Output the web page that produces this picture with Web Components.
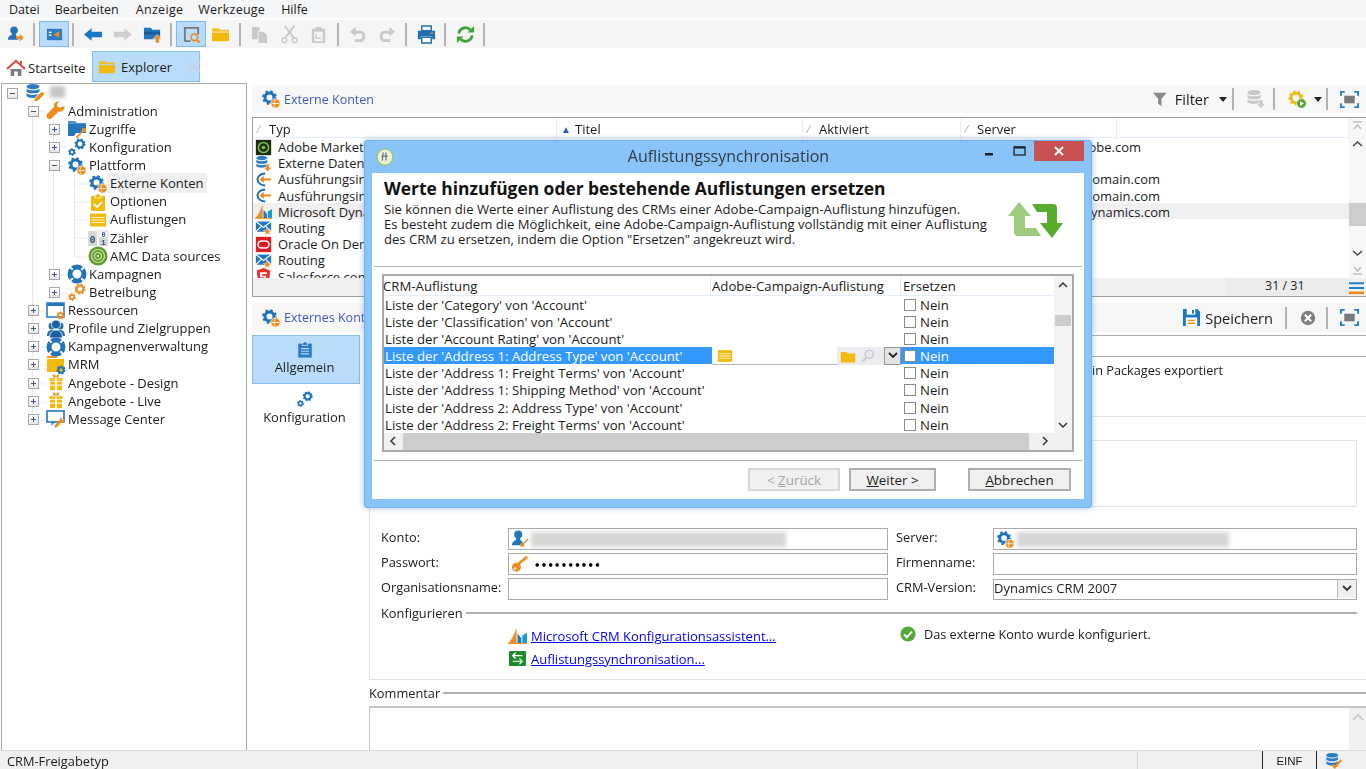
<!DOCTYPE html>
<html lang="de"><head><meta charset="utf-8"><title>Adobe Campaign</title>
<style>
html,body{margin:0;padding:0;width:1366px;height:769px;overflow:hidden;background:#fff;font:13px "Open Sans","Noto Sans",sans-serif;color:#1c1c1c}
</style></head><body>
<app-shell>
  <app-menubar></app-menubar>
  <app-toolbar></app-toolbar>
  <app-tabs></app-tabs>
  <app-main>
    <app-tree slot="tree"></app-tree>
    <list-panel slot="right"></list-panel>
    <detail-panel slot="right"></detail-panel>
  </app-main>
  <status-bar></status-bar>
  <sync-dialog></sync-dialog>
</app-shell>
<script>
const gear=(x,y,r,c,w,n=8)=>{const R=r+w*.5,d=(2*Math.PI*R/(2*n)).toFixed(2);return `<circle cx="${x}" cy="${y}" r="${r}" fill="none" stroke="${c}" stroke-width="${w}"/><circle cx="${x}" cy="${y}" r="${R}" fill="none" stroke="${c}" stroke-width="${w*.9}" stroke-dasharray="${d} ${d}"/>`};
const BL='#1f72bd',OR='#ee8c1e',YE='#f2b90f',GY='#c9c9c9';
const globe=(x,y,r)=>`<circle cx="${x}" cy="${y}" r="${r}" fill="${OR}" stroke="#fff" stroke-width=".8"/><path d="M${x-r+1} ${y}h${2*r-2}M${x} ${y-r+1}c-2 2-2 ${2*r-4} 0 ${2*r-2}" stroke="#fff" stroke-width=".8" fill="none"/>`;
const dbs=c=>`<ellipse cx="8" cy="3.6" rx="6.5" ry="2.6" fill="${c}"/><path d="M1.5 5.4c1 2.6 12 2.6 13 0v3c-1 2.6-12 2.6-13 0zM1.5 10c1 2.6 12 2.6 13 0v3c-1 2.6-12 2.6-13 0z" fill="${c}"/>`;
const folder=c=>`<path d="M1 5V3.5h7L10 5h9v2H1z" fill="${c}" opacity=".85"/><path d="M1 8h18v8a1 1 0 0 1-1 1H2a1 1 0 0 1-1-1z" fill="${c}"/>`;
const ICONS={
user:`<circle cx="8.5" cy="5.5" r="4" fill="${BL}"/><path d="M6.5 8l-.5 2.5C3 11.5 2 13 2 15.5h11V14l-2.5-3.5-.5-2.5z" fill="${BL}"/><path d="M11 13.5h4V11l4.5 4-4.5 4v-2.5h-4z" fill="${OR}" transform="translate(0 -1) scale(.96)"/>`,
panel:`<rect x="2" y="4" width="16" height="12" fill="#2b7cc2"/><rect x="4" y="7" width="3" height="1.4" fill="#fff"/><rect x="4" y="10" width="3" height="1.4" fill="#fff"/><path d="M15 6.5v7l-6-3.5z" fill="${OR}"/>`,
left:`<path d="M0 10l8-6.5V7h11v6H8v3.5z" fill="#1c78c4"/>`,
right:`<path d="M20 10l-8-6.5V7H1v6h11v3.5z" fill="#cfcfcf"/>`,
folderup:`<path d="M1 3h7l2 2h8v10H1z" fill="#2277bd"/><path d="M1 7h17v3H1z" fill="#195d99"/><path d="M15 10l4.5 4.5H17V19h-4v-4.5h-2.5z" fill="${OR}" stroke="#fff" stroke-width=".5"/>`,
searchbox:`<path d="M3 17V3h14v7M3 17h6" stroke="#777" stroke-width="2" fill="none"/><circle cx="13" cy="13" r="3.5" fill="none" stroke="${OR}" stroke-width="1.7"/><path d="M15.5 15.5l3 3" stroke="${OR}" stroke-width="2.2"/>`,
folder:folder(YE),
copy:`<path d="M2 2h8v4H8v9H2z" fill="${GY}"/><path d="M9 7h5l4 4v8H9z" fill="${GY}"/>`,
cut:`<path d="M5 1l10 13M15 1L5 14" stroke="${GY}" stroke-width="2"/><circle cx="4.5" cy="16" r="2.5" fill="none" stroke="${GY}" stroke-width="1.6"/><circle cx="15.5" cy="16" r="2.5" fill="none" stroke="${GY}" stroke-width="1.6"/>`,
paste:`<path d="M3 4h4V2h6v2h4v15H3z" fill="${GY}"/><rect x="5.5" y="7" width="9" height="10" fill="#f5f5f5"/><path d="M7.5 10v4h5" stroke="${GY}" stroke-width="1.5" fill="none"/>`,
undo:`<path d="M8 2L2 7l6 5V9h5c3 0 3 6 0 6H7v3h6c7 0 7-12 0-12H8z" fill="${GY}"/>`,
redo:`<path d="M12 2l6 5-6 5V9H7c-3 0-3 6 0 6h6v3H7C0 18 0 6 7 6h5z" fill="${GY}"/>`,
print:`<path d="M5 1h10v5H5z" fill="none" stroke="#1c6fb3" stroke-width="1.5"/><path d="M1 6h18v9h-3v-3H4v3H1z" fill="#1c6fb3"/><rect x="14" y="8" width="3" height="1.5" fill="${OR}"/><path d="M5 13h10v6H5z" fill="#fff" stroke="#1c6fb3" stroke-width="1.5"/>`,
refresh:`<path d="M3 9a7 7 0 0 1 12-4" fill="none" stroke="#3da33a" stroke-width="3"/><path d="M12 8h7V1z" fill="#3da33a"/><path d="M17 11a7 7 0 0 1-12 4" fill="none" stroke="#3da33a" stroke-width="3"/><path d="M8 12H1v7z" fill="#3da33a"/>`,
home:`<path d="M4 11h12v8h-4v-5H8v5H4z" fill="#7d7d7d"/><path d="M0 11L10 2l10 9" fill="none" stroke="#d9473c" stroke-width="2.2"/><rect x="14.5" y="2" width="2" height="4" fill="#d9473c"/>`,
x:`<path d="M3 3l14 14M17 3L3 17" stroke="#c6d3df" stroke-width="3"/>`,
db:dbs('#2a7cc4')+`<path d="M9 16l7-7c2-1 4 1 3 3l-6 6-4 1z" fill="${OR}" stroke="#fff" stroke-width=".8"/>`,
wrench:`<path d="M18.5 5c.5 3-2 6.5-6 5.5L6 17a3 3 0 0 1-4.5-4.5L8 6C7 2 10.5 0 13.5.5L11 3l.5 3 3 .5z" fill="${OR}"/>`,
folderkey:`<path d="M1 2h7l2 2h9v4H1z" fill="#2277bd" opacity=".8"/><path d="M1 5h18v9H9l-2 3H1z" fill="#2277bd"/><circle cx="17" cy="11" r="2.3" fill="${OR}"/><path d="M15.5 12.5L10 18l1.5 1" stroke="${OR}" stroke-width="1.6" fill="none"/>`,
gears:gear(13,7,3.5,'#1f72bd',2.2)+gear(5,15,2.2,'#1f72bd',1.7,6),
gearso:gear(13,7,3.5,OR,2.2)+gear(5,15,2.2,OR,1.7,6),
gearglobe:gear(8.5,8.5,4.5,'#1f72bd',3)+globe(14.5,14.5,4.7),
clip:`<rect x="3" y="4" width="14" height="15" fill="${YE}"/><path d="M7 6V3h1.5a1.5 1.5 0 0 1 3 0H13v3z" fill="${YE}" stroke="#fff" stroke-width=".7"/><path d="M6 12l3 3 5-5" fill="none" stroke="#fff" stroke-width="1.8"/>`,
list:`<rect x="2" y="3.5" width="16" height="13" fill="${YE}"/><path d="M3.5 7.5h13M3.5 10h13M3.5 12.5h13" stroke="#fff2c4" stroke-width="1.1"/>`,
counter:`<rect x="0" y="3" width="9" height="15" fill="#d7d7d7"/><rect x="11" y="3" width="9" height="7" fill="#fff" stroke="#bbb" stroke-width=".5"/><rect x="11" y="10" width="9" height="8" fill="#d7d7d7"/><text x="4.5" y="14.5" font-family="Liberation Mono" font-weight="700" font-size="10" text-anchor="middle" fill="#30507a">0</text><text x="15.5" y="9" font-family="Liberation Mono" font-weight="700" font-size="7" text-anchor="middle" fill="#30507a">0</text><text x="15.5" y="17" font-family="Liberation Mono" font-weight="700" font-size="8" text-anchor="middle" fill="#30507a">1</text>`,
amc:`<circle cx="10" cy="10" r="9.5" fill="#5f9a2d"/><circle cx="10" cy="10" r="6.5" fill="none" stroke="#cfe5a8" stroke-width="1.2"/><circle cx="10" cy="10" r="3.5" fill="none" stroke="#cfe5a8" stroke-width="1.2"/><circle cx="10" cy="10" r="1.2" fill="#cfe5a8"/>`,
buoy:`<circle cx="10" cy="10" r="7" fill="none" stroke="#1f72bd" stroke-width="5"/><path d="M10 0v4M10 16v4M0 10h4M16 10h4" transform="rotate(45 10 10)" stroke="#fff" stroke-width="2"/>`,
res:`<rect x="1" y="2" width="17" height="14" fill="#fff" stroke="#2277bd" stroke-width="1.5"/><rect x="1" y="2" width="17" height="3" fill="#2277bd"/>`+gear(14.5,14.5,2.3,OR,1.8,7),
people:`<circle cx="6" cy="7" r="3.5" fill="#2a6fb0"/><circle cx="14" cy="7" r="3.5" fill="#2a6fb0"/><path d="M1 17c0-4 2-6 5-6s3 1 4 1 1-1 4-1 5 2 5 6z" fill="#2a6fb0"/><circle cx="10" cy="5.5" r="4.5" fill="#1b5f9f" stroke="#fff" stroke-width=".8"/><path d="M3.5 19c0-5 3-8 6.5-8s6.5 3 6.5 8z" fill="#1b5f9f" stroke="#fff" stroke-width=".8"/>`,
mrm:`<path d="M1 1h10v2H1z" fill="${OR}"/><path d="M1 4h17v13H1z" fill="${YE}"/>`+gear(15,15,2.7,'#2277bd',2,7),
gift:`<g transform="translate(1.5 1) scale(.85)"><rect x="3" y="9" width="14" height="10" fill="${YE}"/><rect x="2" y="5" width="16" height="3" fill="${YE}"/><rect x="9" y="5" width="2" height="14" fill="#fff"/><rect x="3" y="12.5" width="14" height="1.2" fill="#fff"/><path d="M6 1h3l1 3H7zM14 1h-3l-1 3h3z" fill="${OR}"/></g>`,
monitor:`<rect x="1" y="2" width="17" height="11" fill="#fff" stroke="#2277bd" stroke-width="1.6"/><path d="M6 13l-1 4 4-4z" fill="#2277bd"/><path d="M19 11c0 2-2 3-3.5 2.5L11 18a1.3 1.3 0 0 1-2-2l4.5-4.5c-.5-1.5 1-3.5 3-3l-1 1.5.8 1.2 1.5-.2z" fill="${OR}"/>`,
adobe:`<rect x="1" y="1" width="18" height="18" fill="#1d2b16"/><circle cx="10" cy="10" r="6" fill="none" stroke="#7fc241" stroke-width="1.8"/><circle cx="10" cy="10" r="2.2" fill="#7fc241"/>`,
dbdown:dbs('#2a7cc4')+`<path d="M13 11h4v4h2.5L15 19.5 10.5 15H13z" fill="${OR}" stroke="#fff" stroke-width=".5"/>`,
exec:`<path d="M12 3C6 3 3 6.5 3 10s3 7 9 7" fill="none" stroke="#1f72bd" stroke-width="2.4"/><path d="M19 10H9" stroke="${OR}" stroke-width="2.4"/><path d="M5 10l5.5-4v8z" fill="${OR}"/>`,
dyn:`<path d="M0 18C3 16 6 10 9 2v16z" fill="${OR}"/><path d="M10 18V8l4 5v5z" fill="#2277bd"/><path d="M15 18v-8l5-3v11z" fill="#1f9bc9"/><path d="M0 18h20v1H0z" fill="${OR}"/>`,
routing:`<rect x="1" y="3" width="18" height="12" fill="#2277bd"/><path d="M1 3l9 7 9-7M1 15l6-6M19 15l-6-6" stroke="#fff" stroke-width="1.3" fill="none"/><path d="M14.5 10l1.4 3.2 3.4.3-2.6 2.2.8 3.3-3-1.8-3 1.8.8-3.3-2.6-2.2 3.4-.3z" fill="${OR}" stroke="#fff" stroke-width=".5"/>`,
oracle:`<rect x="1" y="1" width="18" height="18" fill="#e01b22"/><rect x="3.5" y="6" width="13" height="8" rx="4" fill="none" stroke="#fff" stroke-width="1.8"/>`,
sales:`<path d="M2 3L10 0l8 3-1 9-7 8-7-8z" fill="#e2362d"/><path d="M6 5h8v2H8.5v2H13l-1 6H7l1-2h2.5l.4-2H6z" fill="#fff"/>`,
filter:`<path d="M0 2h16l-6 7v9l-4-3V9z" fill="#8a8a8a"/>`,
dbgrey:dbs('#c8c8c8')+`<path d="M13 11h4v4h2.5L15 19.5 10.5 15H13z" fill="#c8c8c8" stroke="#fff" stroke-width=".5"/>`,
gearplay:gear(9,9,4.8,YE,2.8,9)+`<circle cx="14.5" cy="14.5" r="4.8" fill="#56a52e" stroke="#fff" stroke-width=".6"/><path d="M13 12l4 2.5-4 2.5z" fill="#fff"/>`,
full:`<path d="M1 6V2h4M15 2h4v4M19 14v4h-4M5 18H1v-4" fill="none" stroke="#1f80cf" stroke-width="2"/><rect x="4.5" y="6" width="11" height="8" fill="#7a7a7a"/>`,
save:`<path d="M1 1h15l3 3v15H1z" fill="#1c78c4"/><rect x="5" y="1" width="9" height="6" fill="#fff"/><rect x="10.5" y="2" width="2" height="4" fill="#1c78c4"/><rect x="4" y="10" width="12" height="9" fill="#fff"/><path d="M6 13h8M6 16h8" stroke="${OR}" stroke-width="1.5"/>`,
cancel:`<circle cx="10" cy="10" r="9" fill="#808080"/><path d="M6 6l8 8M14 6l-8 8" stroke="#fff" stroke-width="2.6"/>`,
clipb:`<rect x="2.5" y="4" width="15" height="15.5" fill="#2b7cc2"/><path d="M7 6V3h1.5a1.5 1.5 0 0 1 3 0H13v3z" fill="#2b7cc2" stroke="#fff" stroke-width=".7"/><path d="M5.5 9.5h9M5.5 12.5h9M5.5 15.5h9" stroke="#bcdcf6" stroke-width="1.3"/>`,
check:`<circle cx="10" cy="10" r="9.5" fill="#53a93a"/><path d="M5 10.5l3.5 3.5L15 7" fill="none" stroke="#fff" stroke-width="2.5"/>`,
sync:`<rect x="1" y="2" width="18" height="16" rx="1.5" fill="#1f8a2d"/><path d="M15 7H5m3-3L5 7l3 3" stroke="#fff" stroke-width="1.5" fill="none"/><path d="M5 13h10m-3-3l3 3-3 3" stroke="#cfe9c6" stroke-width="1.5" fill="none"/>`,
key:`<circle cx="6" cy="13.5" r="5" fill="${OR}"/><circle cx="4.5" cy="15" r="1.4" fill="#fff"/><path d="M8 10L18 2" stroke="${OR}" stroke-width="3"/>`,
userkey:`<circle cx="8" cy="5" r="4.5" fill="#2277bd"/><path d="M6 8.5L5.5 11C3 12 1 14 1 17h13c0-2-1-4-3.5-6L10 8.5z" fill="#2277bd"/><circle cx="12.5" cy="16.5" r="2.3" fill="${OR}"/><path d="M14 15l5-5" stroke="${OR}" stroke-width="1.7"/>`,
folders:`<path d="M1 5h7l2 2h9v11H1z" fill="${YE}"/>`,
search:`<circle cx="11.5" cy="8" r="5" fill="none" stroke="#c9c9c9" stroke-width="1.8"/><path d="M8 12l-5 5" stroke="#c9c9c9" stroke-width="2.5"/>`,
winlogo:`<circle cx="10" cy="10" r="9" fill="#e9f2df" stroke="#9cc46f" stroke-width="1.5"/><path d="M8 5l-1 9M11 5v9M6 9h7" stroke="#6f6f6f" stroke-width="1.3"/>`,
repeat:`<path d="M0 16L11 2 23 16H17V28H28L33 36H10a4 4 0 0 1-4-4V16z" fill="#9ecb7d"/><path d="M24 4H45a4 4 0 0 1 4 4V23H55L44 38 32 23H39V12H29z" fill="#58ac2c"/>`,
stacks:`<path d="M0 3h14M0 7.5h14" stroke="#1f80cf" stroke-width="2"/><path d="M0 12h14" stroke="${OR}" stroke-width="2.5"/>`,
dbok:dbs('#2a7cc4')+`<path d="M8 14l3 3 7-8" stroke="${OR}" stroke-width="2.5" fill="none"/>`
};
function comp(name,css,html){
  customElements.define(name,class extends HTMLElement{
    constructor(){super();const s=this.attachShadow({mode:'open'});s.innerHTML=`<style>${css}</style>${html}`}
  })}
customElements.define('app-icon',class extends HTMLElement{
  static get observedAttributes(){return['name','size','vb']}
  constructor(){super();this.attachShadow({mode:'open'})}
  attributeChangedCallback(){this.draw()} connectedCallback(){this.draw()}
  draw(){const z=this.getAttribute('size')||18,vb=this.getAttribute('vb')||'0 0 20 20';
    this.shadowRoot.innerHTML=`<style>:host{display:inline-flex;flex:none;width:${z}px;height:${z}px}svg{width:100%;height:100%;display:block;overflow:visible}</style><svg viewBox="${vb}" aria-hidden="true">${ICONS[this.getAttribute('name')]||''}</svg>`}
});
comp('app-shell',`:host{display:grid;grid-template-rows:18px 30px 35px 667px 19px;width:1366px;height:769px;position:relative;overflow:hidden;filter:blur(.3px)}`,`<slot></slot>`);
comp('app-menubar',`:host{display:flex;background:#f5f6f7;align-items:center;font-size:12.5px;padding-left:9px;height:18px}
 span:nth-of-type(2){margin-left:15px}
 span:nth-of-type(3){margin-left:17px;letter-spacing:.3px}
 span:nth-of-type(4){margin-left:15px;letter-spacing:.25px}
 span:nth-of-type(5){margin-left:16px}`,
 ['Datei','Bearbeiten','Anzeige','Werkzeuge','Hilfe'].map(t=>`<span>${t}</span>`).join(''));
const TB=[['user'],'|',['panel',1],'|',['left'],['right'],['folderup'],'|',['searchbox',1],['folder'],'|',['copy'],['cut'],['paste'],'|',['undo'],['redo'],'|',['print'],'|',['refresh'],'|'];
comp('app-toolbar',`:host{display:flex;align-items:center;background:#f5f5f5;padding:0 0 0 .25px;height:28px;margin-top:1px;border-top:1px solid #fbfbfb}
 .b{width:29.5px;height:26px;display:flex;align-items:center;justify-content:center;box-sizing:border-box}
 .on{background:#b9dcfb;box-shadow:inset 0 0 0 1px #7fb9ee}
 i{display:block;width:2px;height:23px;background:#b4b4b4;margin:0 4.25px 0 3.25px}`,
 TB.map(t=>t==='|'?'<i></i>':`<div class="b ${t[1]?'on':''}"><app-icon name="${t[0]}" size="19"></app-icon></div>`).join(''));
comp('app-tabs',`:host{display:flex;align-items:flex-end;height:33px;background:#fff;padding-left:7px;margin-top:2px}
 .t{display:flex;align-items:center;height:31px;font-size:13px}
 .h{gap:3px;width:85px}
 .e{width:108px;background:#b9dcfb;box-shadow:inset 0 0 0 1px #86bdee;padding-left:6px;gap:5px;box-sizing:border-box;margin-bottom:1px}
 .e app-icon:last-child{margin-left:10px}`,
 `<div class="t h"><app-icon name="home" size="18"></app-icon><span>Startseite</span></div><div class="t e"><app-icon name="folder" size="18"></app-icon><span>Explorer</span><app-icon name="x" size="15"></app-icon></div>`);
comp('app-main',`:host{display:flex;height:667px;overflow:hidden;padding-left:1px}
 .r{width:1114px;margin-left:5px;display:flex;flex-direction:column;flex:none}`,
 `<slot name="tree"></slot><div class="r"><slot name="right"></slot></div>`);
customElements.define('tree-row',class extends HTMLElement{
 constructor(){super();const s=this.attachShadow({mode:'open'});
  const l=+this.getAttribute('level'),e=this.getAttribute('exp'),sel=this.hasAttribute('sel');
  s.innerHTML=`<style>:host{display:flex;align-items:center;height:18.13px;white-space:nowrap;position:relative}
  .e{width:11px;height:11px;flex:none;margin-right:8.5px;box-sizing:border-box;border:1px solid #a8a8a8;background:linear-gradient(#fff,#e6e6e6);position:relative}
  .n{border:0;background:none}
  .e b{position:absolute;left:2px;right:2px;top:4px;height:1px;background:#3d5a80}
  .e u{position:absolute;top:2px;bottom:2px;left:4px;width:1px;background:#3d5a80}
  app-icon{margin:0 -1px}
  span{margin:-1px 0 0 3px}
  .s{background:#f0f0f0;padding:1px 3px;margin-left:0}
  </style><div class="e ${e?'':'n'}">${e?'<b></b>':''}${e==='+'?'<u></u>':''}</div><app-icon name="${this.getAttribute('icon')}" size="20"></app-icon><span class="${sel?'s':''}"><slot></slot></span>`;
  this.style.paddingLeft=(4.5+21*l)+'px'}
});
const TREE=[[1,'-','wrench','Administration'],[2,'+','folderkey','Zugriffe'],[2,'+','gears','Konfiguration'],[2,'-','gearglobe','Plattform'],[3,'','gearglobe','Externe Konten',1],[3,'','clip','Optionen'],[3,'','list','Auflistungen'],[3,'','counter','Zähler'],[3,'','amc','AMC Data sources'],[2,'+','buoy','Kampagnen'],[2,'+','gearso','Betreibung'],[1,'+','res','Ressourcen'],[1,'+','people','Profile und Zielgruppen'],[1,'+','buoy','Kampagnenverwaltung'],[1,'+','mrm','MRM'],[1,'+','gift','Angebote - Design'],[1,'+','gift','Angebote - Live'],[1,'+','monitor','Message Center']];
comp('app-tree',`:host{display:block;width:246px;height:667px;box-sizing:border-box;border:solid #a9a9a9;border-width:1px 1.5px 0;position:relative;flex:none;overflow:hidden}
 .g{position:absolute;left:0;top:0;width:246px;height:450px}
 .blur{display:inline-block;width:15px;height:12px;background:#c4c4c4;filter:blur(2px);margin-left:3px}`,
 `<svg class="g" aria-hidden="true"><path d="M30.5 16V336M51.5 36V209M72.5 90V173M36 27h8M57 45h8M57 63h8M57 82h8M73 100h13M73 118h13M73 136h13M73 154h13M73 173h13M57 191h8M57 209h8M36 227h8M36 245h8M36 263h8M36 281h8M36 300h8M36 318h8M36 336h8" stroke="#e9e9e9" fill="none"/></svg>
 <tree-row level="0" exp="-" icon="db"><span class="blur"></span></tree-row>`+TREE.map(r=>`<tree-row level="${r[0]}" ${r[1]?`exp="${r[1]}"`:''} icon="${r[2]}" ${r[4]?'sel':''}>${r[3]}</tree-row>`).join(''));
const ROWS=[['adobe','Adobe Marketing Cloud','mc.adobe.com',208],['dbdown','Externe Datenbank','',0],['exec','Ausführungsinstanz','server.domain.com',189],['exec','Ausführungsinstanz','server.domain.com',189],['dyn','Microsoft Dynamics CRM','crm.dynamics.com',179],['routing','Routing','',0],['oracle','Oracle On Demand','',0],['routing','Routing','',0],['sales','Salesforce.com','',0]];
const sep=()=>`<i style="display:block;width:2px;height:22px;background:#b3b3b3;flex:none"></i>`;
comp('list-panel',`:host{display:block;flex:none;margin-top:2px}
 .bar{height:28px;display:flex;align-items:center;background:#f7f7f7;margin-bottom:4px}
 .ttl{color:#3f5cc0;font-size:12.5px;margin-left:3px}
 .sp{flex:1}
 .tx{font-size:14.6px;margin-left:5px}
 .c{width:0;height:0;border:4px solid transparent;border-top:5px solid #222;border-bottom:0}
 .box{height:180px;box-sizing:border-box;border:solid #9d9d9d;border-width:1.5px 0 1.5px 1.5px;display:grid;grid-template-columns:1fr 17px;grid-template-rows:160px 1fr;background:#fff;overflow:hidden}
 .cols{display:grid;grid-template-columns:304px 246px 158px 156px 1fr;height:19px;border-bottom:1.5px solid #e3eefa}
 .cols div{border-right:1px solid #e6eef8;padding-left:16px;position:relative;line-height:22px;font-size:13px}
 .cols b{position:absolute;left:5px;top:0;font-weight:400;color:#999;font-size:10px}
 .cols b.up{color:#1f5fc0;left:4px;font-size:10px}
 .row{display:grid;grid-template-columns:16px 1fr auto;align-items:center;height:16.2px;font-size:13px;padding-left:2px;gap:0 7px;white-space:nowrap}
 .row.hl{background:#f0f0f0}
 .rows{height:140px;overflow:hidden}
 .sb{position:relative;background:#f7f7f7}
 .ft{grid-column:1 / 3;background:#f0f0f0;display:flex;justify-content:flex-end;align-items:center;font-size:12.5px}
 .ft .cnt{width:124px;background:#ececec;padding-left:40px;box-sizing:border-box;height:100%;line-height:16px}
 .ft app-icon{margin:0 2px 0 0}`,
 `<div class="bar"><div style="width:9px"></div><app-icon name="gearglobe" size="20"></app-icon><span class="ttl">Externe Konten</span><div class="sp"></div><app-icon name="filter" size="17"></app-icon><span class="tx">Filter</span><div class="c" style="margin:0 5px 0 10px"></div>${sep()}<app-icon name="dbgrey" size="20" style="margin:0 7px 0 12px"></app-icon>${sep()}<app-icon name="gearplay" size="20" style="margin:0 7px 0 12px"></app-icon><div class="c" style="margin-right:4px"></div>${sep()}<app-icon name="full" size="19" style="margin:0 7px 0 12px"></app-icon></div>
 <div class="box"><div style="display:flex;flex-direction:column;min-width:0"><div class="cols"><div><b>⁄</b>Typ</div><div style="padding-left:18px"><b class="up">▲</b>Titel</div><div><b>⁄</b>Aktiviert</div><div><b>⁄</b>Server</div><div></div></div>
 <div class="rows">${ROWS.map((r,i)=>`<div class="row ${i==4?'hl':''}"><app-icon name="${r[0]}" size="17"></app-icon><span>${r[1]}</span><span style="padding-right:${r[3]}px">${r[2]}</span></div>`).join('')}</div></div>
 <div class="sb"><svg width="17" height="160" style="position:absolute;left:0;top:0"><rect y="85" width="17" height="23" fill="#cdcdcd"/><path d="M4 4h9M5 11l3.5-4 3.5 4" stroke="#c0c0c0" stroke-width="1.5" fill="none"/><path d="M4 28l4.5-4 4.5 4M4 133l4.5 4 4.5-4" stroke="#444" stroke-width="1.5" fill="none"/><path d="M4 156h9M5 149l3.5 4 3.5-4" stroke="#c0c0c0" stroke-width="1.5" fill="none"/></svg></div>
 <div class="ft"><div class="cnt">31 / 31</div><app-icon name="stacks" size="15" vb="0 0 14 14"></app-icon></div></div>`);
comp('form-field',`:host{display:flex;align-items:center;height:22px;box-sizing:border-box;border:1.5px solid #ababab;background:#fff;gap:2px;padding-left:2px;overflow:hidden;font-size:13px}
 ::slotted(*){flex:none}`,`<slot></slot>`);
comp('detail-panel',`:host{display:flex;flex-direction:column;margin-top:6px;flex:none;height:447px;overflow:hidden}
 .bar{height:29px;display:flex;align-items:center;background:#f7f7f7;margin-bottom:3px;flex:none}
 .ttl{color:#3f5cc0;font-size:12.5px;margin-left:3px}
 .sp{flex:1}
 .tx{font-size:14.6px;margin:0 12px 0 4px}
 .body{display:grid;grid-template-columns:108px 1fr;flex:1;min-height:0}
 .nav{display:flex;flex-direction:column;align-items:center;font-size:13px}
 .it{width:108px;display:flex;flex-direction:column;align-items:center;box-sizing:border-box;padding-right:3px}
 .on{height:49px;background:#b9dcfb;box-shadow:inset 0 0 0 1px #86bdee;padding-top:5px;font-weight:500}
 .off{height:50px;padding-top:6px}
 .c{margin-left:9px;display:flex;flex-direction:column;min-width:0}
 .l1{height:21px;box-sizing:border-box;border-top:1.5px solid #aeaeae;flex:none}
 .l2{height:60px;box-sizing:border-box;border-top:1.5px solid #aeaeae;padding:4px 0 0 723px;flex:none;white-space:nowrap;font-size:12.7px}
 .fs{height:264px;box-sizing:border-box;border:solid #e2e2e2;border-width:1.5px 0 1.5px 1.5px;padding:23px 9px 0 11px;flex:none}
 .in{height:67px;box-sizing:border-box;border:1.5px solid #e2e2e2;margin-bottom:21px}
 .g{display:grid;grid-template-columns:127px 380px 8px 97px 364px;grid-auto-rows:22px;row-gap:3px;align-items:center;font-size:12.8px}
 .g>span{margin-top:-4px}
 .blur{width:255px;height:15px;background:#d6d6d6;filter:blur(2px)}
 .dots{font-size:10px;letter-spacing:.3px;color:#000;margin:3px 0 0 3px;font-family:"DejaVu Sans",sans-serif;font-weight:700}
 .sel{display:flex;align-items:center;height:21px;box-sizing:border-box;border:1.5px solid #ababab;background:#fff;justify-content:space-between;font-size:13px}
 .sel span{margin-top:-2px}
 .sel div{width:18px;height:18px;background:#efefef;border-left:1px solid #bbb;display:flex;align-items:center;justify-content:center}
 .kon{display:flex;align-items:center;height:14px;margin-top:6px;font-size:12.8px}
 .kon i{flex:1;height:1.5px;background:#b0b0b0;margin-left:3px}
 .lk{display:grid;grid-template-columns:127px 388px 1fr;margin-top:4px;font-size:13px;grid-auto-rows:23px;align-items:center}
 .lk a{color:#0000ee;text-decoration:underline;display:flex}
 .lk div{display:flex;align-items:center;gap:4px}
 .kom{display:flex;align-items:center;height:14px;margin-top:6px;font-size:12.8px;flex:none}
 .kom i{flex:1;height:1.5px;background:#b0b0b0;margin-left:3px}
 .ta{flex:1;margin-top:6px;box-sizing:border-box;border:solid #c6c6c6;border-width:2px 0 0 1.5px;display:flex;justify-content:flex-end}
 .ta div{width:17px;background:#f0f0f0;display:flex;justify-content:center;padding-top:5px;box-sizing:border-box}`,
 `<div class="bar"><div style="width:9px"></div><app-icon name="gearglobe" size="20"></app-icon><span class="ttl">Externes Konto</span><div class="sp"></div><app-icon name="save" size="19"></app-icon><span class="tx">Speichern</span>${sep()}<app-icon name="cancel" size="16" style="margin:0 10px 0 13px"></app-icon>${sep()}<app-icon name="full" size="19" style="margin:0 7px 0 12px"></app-icon></div>
 <div class="body"><div class="nav"><div class="it on"><app-icon name="clipb" size="18"></app-icon>Allgemein</div><div class="it off"><app-icon name="gears" size="18"></app-icon>Konfiguration</div></div>
 <div class="c"><div class="l1"></div><div class="l2">in Packages exportiert</div>
 <div class="fs"><div class="in"></div>
 <div class="g"><span>Konto:</span><form-field><app-icon name="userkey" size="18"></app-icon><div class="blur"></div></form-field><b></b><span>Server:</span><form-field><app-icon name="gearglobe" size="19"></app-icon><div class="blur" style="width:212px"></div></form-field>
 <span>Passwort:</span><form-field><app-icon name="key" size="18"></app-icon><span class="dots">••••••••••</span></form-field><b></b><span>Firmenname:</span><form-field></form-field>
 <span>Organisationsname:</span><form-field></form-field><b></b><span>CRM-Version:</span><div class="sel"><span>Dynamics CRM 2007</span><div><svg width="10" height="8"><path d="M1 1l4 4 4-4" stroke="#333" stroke-width="1.8" fill="none"/></svg></div></div></div>
 <div class="kon">Konfigurieren<i></i></div>
 <div class="lk"><div style="grid-column:1"></div><div><app-icon name="dyn" size="19"></app-icon><a>Microsoft CRM Konfigurationsassistent...</a></div><div style="padding-left:4px;gap:8px;font-size:12.7px;margin-top:-4px"><app-icon name="check" size="16"></app-icon>Das externe Konto wurde konfiguriert.</div>
 <div></div><div><app-icon name="sync" size="19"></app-icon><a>Auflistungssynchronisation...</a></div></div>
 </div>
 <div class="kom">Kommentar<i></i></div>
 <div class="ta"><div><svg width="12" height="8"><path d="M1 7l5-5 5 5" stroke="#cfcfcf" stroke-width="2" fill="none"/></svg></div></div>
 </div></div>`);
comp('status-bar',`:host{display:flex;align-items:center;background:#f0f0f0;border-top:1px solid #dcdcdc;box-sizing:border-box;height:19px;padding-left:7px;font-size:12.8px;overflow:hidden}
 .s{flex:1}
 i{display:block;width:1px;height:18px}
 .e{font-size:11.5px;width:53px;text-align:center;font-family:"Liberation Sans",sans-serif;padding-top:1px}`,
 `<span style="width:1130px;padding-top:2px">CRM-Freigabetyp</span><i style="background:#d4d4d4"></i><div class="s"></div><i style="background:#222"></i><div class="e">EINF</div><i style="background:#222"></i><app-icon name="dbok" size="18" style="margin:2px 0 0 8px"></app-icon><div style="width:23px"></div>`);
const SY=["Category","Classification","Account Rating","Address 1: Address Type","Address 1: Freight Terms","Address 1: Shipping Method","Address 2: Address Type","Address 2: Freight Terms"];
comp('sync-dialog',`:host{position:absolute;left:364px;top:140px;width:728px;height:368px;background:#8ac3f8;box-sizing:border-box;border:1px solid #74b0ea;border-radius:3px;display:flex;flex-direction:column;box-shadow:0 0 6px rgba(60,120,190,.45)}
 .ti{height:32px;flex:none;display:flex;align-items:center;position:relative;padding-left:11px}
 .tt{position:absolute;left:0;right:0;text-align:center;font-size:16px;color:#2e3a44;padding-left:1px;margin-top:-3px}
 .wc{margin-left:auto;display:flex;align-items:flex-start;height:100%;position:relative}
 .cl{width:50px;height:20px;background:#c75050;display:flex;align-items:center;justify-content:center;margin:0 7px 0 0}
 .mn{width:30px;display:flex;justify-content:center;height:20px;align-items:center}
 .inn{flex:1;background:#fff;margin:0 7px 8px 7px;min-height:0;display:flex;flex-direction:column}
 .hd{height:94px;flex:none;box-sizing:border-box;border-bottom:1.5px solid #b0b0b0;margin:0 2px;padding-left:10px}
 .hd h1{font-size:17.4px;font-weight:700;margin:5px 0 3px;line-height:21px;color:#111;white-space:nowrap}
 .hd p{margin:0;font-size:13.1px;line-height:15px;white-space:nowrap}
 .lst{height:178px;margin:7px 0 0 10px;width:692px;box-sizing:border-box;border:2px solid #aaa;display:grid;grid-template-columns:1fr 18px;grid-template-rows:1fr 17px;flex:none}
 .h{display:grid;grid-template-columns:327px 190px 1fr;height:20px;line-height:20px;font-size:13.2px;border-bottom:1px solid #e3eefa;box-sizing:border-box;white-space:nowrap}
 .h span{border-right:1px solid #e3e9f0;margin-left:-1px}
 .h span+span{margin-left:0;padding-left:1px}
 .h span:last-child{border:0;padding-left:2px}
 .r{display:grid;grid-template-columns:327px 190px 1fr;height:17.1px;align-items:center;font-size:13.2px;white-space:nowrap}
 .r>span:first-child{padding-left:1px}
 .r.s{background:#3399ff;color:#fff}
 .cb{width:12px;height:12px;border:1px solid #8a8a8a;background:#fff;box-sizing:border-box;margin-left:3px;flex:none}
 .ne{display:flex;align-items:center;gap:4px}
 .edit{display:flex;height:18px;align-self:start;margin-left:1px}
 .edit .f{width:126px;background:#fff;display:flex;align-items:center;padding-left:4px;box-sizing:border-box;border-bottom:1px solid #b5b5b5}
 .edit .m{width:47px;background:#eaecef;display:flex;align-items:center;padding-left:3px;box-sizing:border-box;gap:4px}
 .edit .d{width:17px;background:#e3e3e3;border:1px solid #999;box-sizing:border-box;display:flex;align-items:center;justify-content:center}
 .vs{background:#f4f4f4}
 .hs{grid-column:1 / 3;background:#f0f0f0}
 .ft{margin:8px 0 0 2px;padding-top:7px;border-top:1.5px solid #b0b0b0;display:flex;width:708px;flex:none}
 .bt{height:23px;box-sizing:border-box;border:2px solid #aeaeae;background:#f0f0f0;display:flex;align-items:center;justify-content:center;font-size:13.4px;white-space:pre}
 .bt.dis{border-color:#d6d6d6;color:#a4a4a4}`,
 `<div class="ti"><app-icon name="winlogo" size="18"></app-icon><div class="tt">Auflistungssynchronisation</div>
   <div class="wc"><div class="mn"><svg width="12" height="12"><rect x="2" y="8" width="8" height="2.5" fill="#222"/></svg></div><div class="mn"><svg width="13" height="12"><rect x="1" y="2" width="11" height="8" fill="none" stroke="#222" stroke-width="1.3"/><rect x="1" y="1.5" width="11" height="2" fill="#222"/></svg></div><div class="cl"><svg width="12" height="12"><path d="M2 2l8 8M10 2l-8 8" stroke="#fff" stroke-width="2"/></svg></div></div></div>
 <div class="inn">
  <div class="hd"><h1>Werte hinzufügen oder bestehende Auflistungen ersetzen</h1><p>Sie können die Werte einer Auflistung des CRMs einer Adobe-Campaign-Auflistung hinzufügen.<br>Es besteht zudem die Möglichkeit, eine Adobe-Campaign-Auflistung vollständig mit einer Auflistung<br>des CRM zu ersetzen, indem die Option "Ersetzen" angekreuzt wird.</p>
  <app-icon name="repeat" vb="0 0 56 40" style="position:absolute;left:643px;top:59px;width:56px;height:40px"></app-icon></div>
  <div class="lst"><div style="min-width:0"><div class="h"><span>CRM-Auflistung</span><span>Adobe-Campaign-Auflistung</span><span>Ersetzen</span></div>
   ${SY.map((t,i)=>`<div class="r ${i==3?'s':''}"><span>Liste der '${t}' von 'Account'</span>${i==3?`<div class="edit"><div class="f"><app-icon name="list" size="18"></app-icon></div><div class="m"><app-icon name="folders" size="16"></app-icon><app-icon name="search" size="16"></app-icon></div><div class="d"><svg width="10" height="8"><path d="M1 1l4 4 4-4" stroke="#222" stroke-width="1.8" fill="none"/></svg></div></div>`:'<span></span>'}<div class="ne"><div class="cb"></div>Nein</div></div>`).join('')}</div>
   <div class="vs"><svg width="18" height="157" style="display:block"><rect x="1" y="39" width="16" height="11" fill="#cdcdcd"/><path d="M5 11l4-4 4 4M5 147l4 4 4-4" stroke="#333" stroke-width="1.5" fill="none"/></svg></div>
   <div class="hs"><svg width="688" height="17" style="display:block"><rect x="19" y="0" width="626" height="17" fill="#cdcdcd"/><path d="M11 4l-4 4 4 4M659 4l4 4-4 4" stroke="#333" stroke-width="1.5" fill="none"/></svg></div></div>
  <div class="ft"><div style="width:374px"></div><div class="bt dis" style="width:92px">&lt; <u>Z</u>urück</div><div class="bt" style="width:87px;margin-left:9px"><u>W</u>eiter &gt;</div><div class="bt" style="width:103px;margin-left:32px"><u>A</u>bbrechen</div></div>
 </div>`);
</script>
</body></html>
